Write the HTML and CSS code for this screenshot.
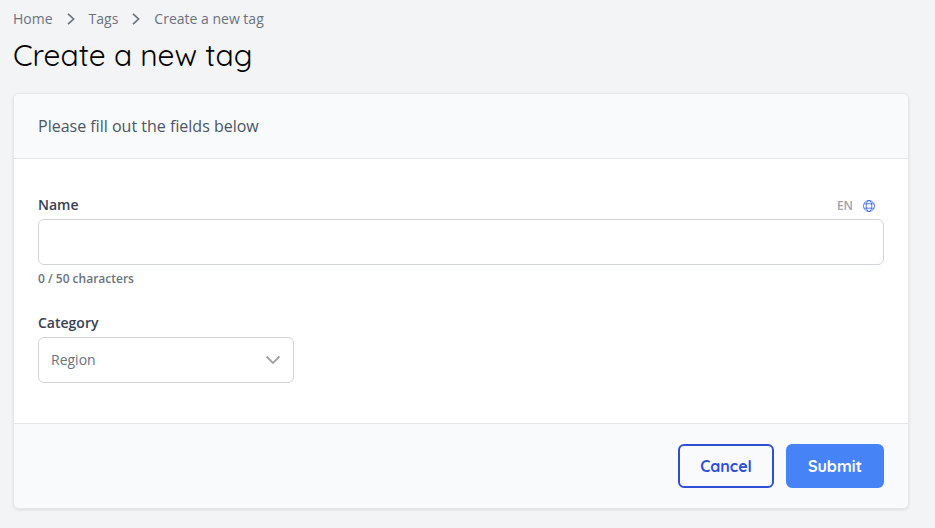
FILE: index.html
```html
<!DOCTYPE html>
<html lang="en">
<head>
  <meta charset="UTF-8">
  <meta name="viewport" content="width=device-width, initial-scale=1.0">
  <title>Create a new tag</title>
  <link rel="stylesheet" href="styles.css">
</head>
<body>
  <main class="page">
    <nav class="breadcrumb" aria-label="Breadcrumb">
      <a href="#">Home</a>
      <svg class="separator" viewBox="0 0 8 12" aria-hidden="true"><path d="M1 .8L6.6 6 1 11.2"/></svg>
      <a href="#">Tags</a>
      <svg class="separator" viewBox="0 0 8 12" aria-hidden="true"><path d="M1 .8L6.6 6 1 11.2"/></svg>
      <a href="#" aria-current="page">Create a new tag</a>
    </nav>
    <h1>Create a new tag</h1>

    <form class="card">
      <header class="card-header">Please fill out the fields below</header>

      <div class="card-body">
        <div class="field">
          <div class="label-row">
            <label for="name">Name</label>
            <span class="locale">
              EN
              <svg class="globe" viewBox="0 0 12 12" aria-hidden="true">
                <circle cx="6" cy="6" r="5.5"/>
                <ellipse cx="6" cy="6" rx="2.8" ry="5.5"/>
                <path d="M1.2 3.8h9.6M1.2 8.2h9.6"/>
              </svg>
            </span>
          </div>
          <input type="text" id="name" maxlength="50" aria-describedby="name-count">
          <p class="hint" id="name-count">0 / 50 characters</p>
        </div>

        <div class="field">
          <label for="category">Category</label>
          <div class="select">
            <select id="category">
              <option>Region</option>
            </select>
            <svg class="arrow" viewBox="0 0 16 10" aria-hidden="true"><path d="M1.5 1.5L8 8l6.5-6.5"/></svg>
          </div>
        </div>
      </div>

      <footer class="card-footer">
        <button type="button" class="btn cancel">Cancel</button>
        <button type="submit" class="btn submit">Submit</button>
      </footer>
    </form>
  </main>
</body>
</html>
```

FILE: styles.css
```css
* {
  box-sizing: border-box;
}

body {
  margin: 0;
  background-color: #f3f4f6;
  color: #374151;
  font-family: "Open Sans", "Noto Sans", sans-serif;
  font-size: 14px;
  line-height: 20px;
}

.page {
  padding: 9px 26px 19px 13px;
}

.breadcrumb {
  display: flex;
  align-items: center;
  gap: 14px;
}

.breadcrumb a {
  color: #6b7280;
  text-decoration: none;
}

.separator {
  width: 8px;
  height: 12px;
  fill: none;
  stroke: #6b7280;
  stroke-width: 1.7;
}

h1 {
  margin: 8px 0 20px;
  color: #000;
  font-family: Quicksand, Lato, sans-serif;
  font-size: 30px;
  font-weight: 400;
  line-height: 36px;
}

.card {
  overflow: hidden;
  border: 1px solid #e5e7eb;
  border-radius: 6px;
  background-color: #fff;
  box-shadow: 0 1px 3px rgba(0, 0, 0, 0.1);
}

.card-header {
  padding: 20px 24px;
  border-bottom: 1px solid #e5e7eb;
  background-color: #f9fafc;
  color: #4b5563;
  font-size: 16px;
  line-height: 24px;
}

.card-body {
  padding: 36px 24px 40px;
}

.field + .field {
  margin-top: 24px;
}

label {
  display: block;
  font-weight: 600;
}

.label-row {
  display: flex;
  justify-content: space-between;
}

.locale {
  display: flex;
  align-items: center;
  gap: 10px;
  padding: 1px 9px 0 0;
  color: #9ca3af;
  font-size: 12px;
  font-weight: 600;
  line-height: 19px;
}

.globe {
  width: 12px;
  height: 12px;
  fill: none;
  stroke: #2f62ea;
  stroke-width: 0.8;
}

input,
select {
  display: block;
  width: 100%;
  height: 46px;
  margin-top: 4px;
  padding: 0 12px;
  border: 1px solid #d1d5db;
  border-radius: 6px;
  background-color: #fff;
  color: #6b7280;
  font: inherit;
}

.hint {
  margin: 4px 0 0;
  color: #6b7280;
  font-size: 12px;
  font-weight: 600;
}

.select {
  position: relative;
  width: 256px;
}

select {
  appearance: none;
}

.arrow {
  position: absolute;
  top: 18px;
  right: 13px;
  width: 16px;
  height: 10px;
  fill: none;
  stroke: #a3a3a3;
  stroke-width: 1.8;
  pointer-events: none;
}

.card-footer {
  display: flex;
  justify-content: flex-end;
  gap: 12px;
  padding: 20px 24px;
  border-top: 1px solid #e5e7eb;
  background-color: #f9fafc;
}

.btn {
  height: 44px;
  padding: 0 20px;
  border: 2px solid #4683f7;
  border-radius: 6px;
  font-family: Quicksand, Lato, sans-serif;
  font-size: 16px;
  font-weight: 700;
  cursor: pointer;
}

.cancel {
  border-color: #2f4fd6;
  background-color: transparent;
  color: #2f4fd6;
}

.submit {
  background-color: #4683f7;
  color: #fff;
}
```
